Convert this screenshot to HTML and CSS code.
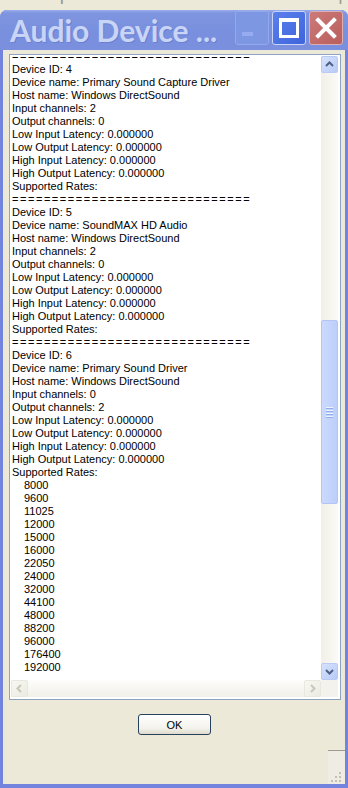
FILE: index.html
```html
<!DOCTYPE html>
<html lang="en">
<head>
    <meta charset="UTF-8">
    <title>Audio Device</title>
    <link rel="stylesheet" href="styles.css">
</head>
<body>
    <div class="app-menu">
        <span class="menu-item m-transport">Transport</span>
        <span class="menu-item m-tracks">Tracks</span>
        <span class="menu-item m-generate">Generate</span>
        <span class="menu-item m-next">|</span>
    </div>

    <div class="window">
        <div class="titlebar">
            <div class="title">Audio Device ...</div>
            <div class="caption-buttons">
                <div class="cap-btn cap-min">
                    <svg width="34" height="34" viewBox="0 0 34 34"><rect x="7" y="21" width="11" height="4" fill="#97acf0"/></svg>
                </div>
                <div class="cap-btn cap-max">
                    <svg width="34" height="34" viewBox="0 0 34 34"><rect x="8.5" y="8.5" width="17" height="17" fill="none" stroke="#fff" stroke-width="3"/><rect x="7" y="7" width="20" height="4" fill="#fff"/></svg>
                </div>
                <div class="cap-btn cap-close">
                    <svg width="34" height="34" viewBox="0 0 34 34"><path d="M9 9 L25 25 M25 9 L9 25" stroke="#fff" stroke-width="4" stroke-linecap="square"/></svg>
                </div>
            </div>
        </div>

        <div class="client">
            <div class="textbox">
                <div class="text-view">
                    <div class="text-content">
                        <div class="line sep">==============================</div>
                        <div class="line">Device ID: 4</div>
                        <div class="line">Device name: Primary Sound Capture Driver</div>
                        <div class="line">Host name: Windows DirectSound</div>
                        <div class="line">Input channels: 2</div>
                        <div class="line">Output channels: 0</div>
                        <div class="line">Low Input Latency: 0.000000</div>
                        <div class="line">Low Output Latency: 0.000000</div>
                        <div class="line">High Input Latency: 0.000000</div>
                        <div class="line">High Output Latency: 0.000000</div>
                        <div class="line">Supported Rates:</div>
                        <div class="line sep">==============================</div>
                        <div class="line">Device ID: 5</div>
                        <div class="line">Device name: SoundMAX HD Audio</div>
                        <div class="line">Host name: Windows DirectSound</div>
                        <div class="line">Input channels: 2</div>
                        <div class="line">Output channels: 0</div>
                        <div class="line">Low Input Latency: 0.000000</div>
                        <div class="line">Low Output Latency: 0.000000</div>
                        <div class="line">High Input Latency: 0.000000</div>
                        <div class="line">High Output Latency: 0.000000</div>
                        <div class="line">Supported Rates:</div>
                        <div class="line sep">==============================</div>
                        <div class="line">Device ID: 6</div>
                        <div class="line">Device name: Primary Sound Driver</div>
                        <div class="line">Host name: Windows DirectSound</div>
                        <div class="line">Input channels: 0</div>
                        <div class="line">Output channels: 2</div>
                        <div class="line">Low Input Latency: 0.000000</div>
                        <div class="line">Low Output Latency: 0.000000</div>
                        <div class="line">High Input Latency: 0.000000</div>
                        <div class="line">High Output Latency: 0.000000</div>
                        <div class="line">Supported Rates:</div>
                        <div class="line rate">8000</div>
                        <div class="line rate">9600</div>
                        <div class="line rate">11025</div>
                        <div class="line rate">12000</div>
                        <div class="line rate">15000</div>
                        <div class="line rate">16000</div>
                        <div class="line rate">22050</div>
                        <div class="line rate">24000</div>
                        <div class="line rate">32000</div>
                        <div class="line rate">44100</div>
                        <div class="line rate">48000</div>
                        <div class="line rate">88200</div>
                        <div class="line rate">96000</div>
                        <div class="line rate">176400</div>
                        <div class="line rate">192000</div>
                    </div>
                </div>

                <div class="vscroll">
                    <div class="sb-btn">
                        <svg width="15" height="15" viewBox="0 0 15 15"><path d="M4 9 L7.5 5.5 L11 9" fill="none" stroke="#4d6185" stroke-width="2"/></svg>
                    </div>
                    <div class="vtrack">
                        <div class="thumb">
                            <div class="grip-lines"><span></span><span></span><span></span><span></span></div>
                        </div>
                    </div>
                    <div class="sb-btn">
                        <svg width="15" height="15" viewBox="0 0 15 15"><path d="M4 6 L7.5 9.5 L11 6" fill="none" stroke="#4d6185" stroke-width="2"/></svg>
                    </div>
                </div>

                <div class="hscroll">
                    <div class="sb-btn disabled">
                        <svg width="15" height="15" viewBox="0 0 15 15"><path d="M9 4 L5.5 7.5 L9 11" fill="none" stroke="#c9c7ba" stroke-width="2"/></svg>
                    </div>
                    <div class="htrack"></div>
                    <div class="sb-btn disabled">
                        <svg width="15" height="15" viewBox="0 0 15 15"><path d="M6 4 L9.5 7.5 L6 11" fill="none" stroke="#c9c7ba" stroke-width="2"/></svg>
                    </div>
                </div>

                <div class="sb-corner"></div>
            </div>

            <div class="button-row">
                <button class="ok-btn">OK</button>
            </div>

            <div class="status-row">
                <div class="size-grip">
                    <svg width="17" height="34" viewBox="0 0 17 34">
                        <rect x="11" y="22" width="2" height="2" fill="#c3c0b0"/>
                        <rect x="7" y="26" width="2" height="2" fill="#c3c0b0"/>
                        <rect x="11" y="26" width="2" height="2" fill="#c3c0b0"/>
                        <rect x="3" y="30" width="2" height="2" fill="#c3c0b0"/>
                        <rect x="7" y="30" width="2" height="2" fill="#c3c0b0"/>
                        <rect x="11" y="30" width="2" height="2" fill="#c3c0b0"/>
                    </svg>
                </div>
            </div>
        </div>
    </div>
</body>
</html>
```

FILE: styles.css
```css
body {
    margin: 0;
    padding: 0;
    width: 348px;
    height: 788px;
    overflow: hidden;
    background: #ece9d8;
    font-family: "Liberation Sans", Arial, sans-serif;
}

/* la aplicacion de atras, solo se ve la parte de abajo del menu */
.app-menu {
    height: 10px;
    overflow: hidden;
    position: relative;
    white-space: nowrap;
}

.menu-item {
    position: absolute;
    top: -17px;
    font-size: 19px;
    line-height: 22px;
    color: #9a988e;
}

.m-transport { left: 12px; }
.m-tracks { left: 130px; }
.m-generate { left: 218px; }
.m-next { left: 338px; }

.window {
    height: 778px;
    background: #7384df;
    border-radius: 7px 7px 0 0;
    padding: 0 3px 4px 3px;
    box-sizing: border-box;
    display: flex;
    flex-direction: column;
}

.titlebar {
    height: 40px;
    margin: 0 -3px;
    border-radius: 7px 7px 0 0;
    background: linear-gradient(to bottom, #9aace9 0px, #7f95e0 3px, #7990de 20px, #7a8fdd 100%);
    display: flex;
    align-items: flex-start;
    flex-shrink: 0;
}

.title {
    font-family: Lato, "Liberation Sans", sans-serif;
    font-weight: bold;
    font-size: 30px;
    line-height: 40px;
    padding-left: 10px;
    color: #c9d5f5;
    white-space: nowrap;
    text-shadow: 1px 1px 0 #6a80d2;
}

.caption-buttons {
    margin-left: auto;
    padding-top: 1px;
    padding-right: 5px;
    display: flex;
    gap: 3px;
}

.cap-btn {
    width: 34px;
    height: 34px;
    border-radius: 3px;
    box-sizing: border-box;
    overflow: hidden;
}

.cap-btn svg {
    display: block;
    margin: -1px;
}

.cap-min {
    background: #7d97e3;
    border: 1px solid #94a9ec;
}

.cap-max {
    background: linear-gradient(135deg, #5a80ec, #3f64dc);
    border: 1px solid #c9d4f6;
}

.cap-close {
    background: linear-gradient(135deg, #cc7a78, #b95e5d);
    border: 1px solid #dcaeb0;
}

.client {
    flex: 1;
    background: #ece9d8;
    display: flex;
    flex-direction: column;
}

.textbox {
    margin: 4px 0 0 6px;
    width: 332px;
    height: 646px;
    box-sizing: border-box;
    border: 1px solid #8ea3c1;
    background: #fff;
    padding: 1px 2px 2px 1px;
    display: grid;
    grid-template-columns: 310px 17px;
    grid-template-rows: 624px 17px;
}

.text-view {
    overflow: hidden;
}

.text-content {
    margin-top: -6px;
    padding-left: 1px;
    font-size: 11px;
    line-height: 13px;
    color: #000;
    white-space: nowrap;
}

.sep {
    letter-spacing: 1.55px;
}

.rate {
    padding-left: 12px;
}

.vscroll {
    display: flex;
    flex-direction: column;
    background: linear-gradient(to right, #f1efe6, #fbfaf6);
}

.vtrack {
    flex: 1;
}

.sb-btn {
    width: 17px;
    height: 17px;
    box-sizing: border-box;
    border: 1px solid #b9cbf5;
    border-radius: 2px;
    background: linear-gradient(135deg, #d6e2fd, #b8cbf7);
    display: flex;
    align-items: center;
    justify-content: center;
    flex-shrink: 0;
}

.sb-btn.disabled {
    border-color: #e9e8df;
    background: linear-gradient(135deg, #f8f7f2, #ebeae2);
}

.thumb {
    margin-top: 247px;
    height: 184px;
    box-sizing: border-box;
    border: 1px solid #b2c5f3;
    border-radius: 2px;
    background: linear-gradient(to right, #cbd9fd, #bccffb);
    display: flex;
    align-items: center;
    justify-content: center;
}

.grip-lines {
    display: flex;
    flex-direction: column;
    gap: 1px;
}

.grip-lines span {
    display: block;
    width: 7px;
    height: 1px;
    background: #eef3fe;
    border-bottom: 1px solid #8fadee;
}

.hscroll {
    display: flex;
    background: linear-gradient(to bottom, #fdfdfb, #f1f0e8);
}

.htrack {
    flex: 1;
}

.sb-corner {
    background: #f3f2ec;
}

.button-row {
    display: flex;
    justify-content: center;
    margin-top: 14px;
}

.ok-btn {
    width: 73px;
    height: 21px;
    margin-left: 1px;
    border: 1px solid #27415f;
    border-radius: 3px;
    background: linear-gradient(to bottom, #ffffff, #f3f2ec 70%, #dedbcc);
    font-family: "Liberation Sans", Arial, sans-serif;
    font-size: 11px;
    color: #000;
    padding: 0;
}

.status-row {
    margin-top: auto;
    display: flex;
    justify-content: flex-end;
}

.size-grip {
    width: 17px;
    height: 34px;
    box-sizing: border-box;
    border-top: 1px solid #9d9b93;
    background: #efede3;
}

.size-grip svg {
    display: block;
    margin-top: -1px;
}
```
